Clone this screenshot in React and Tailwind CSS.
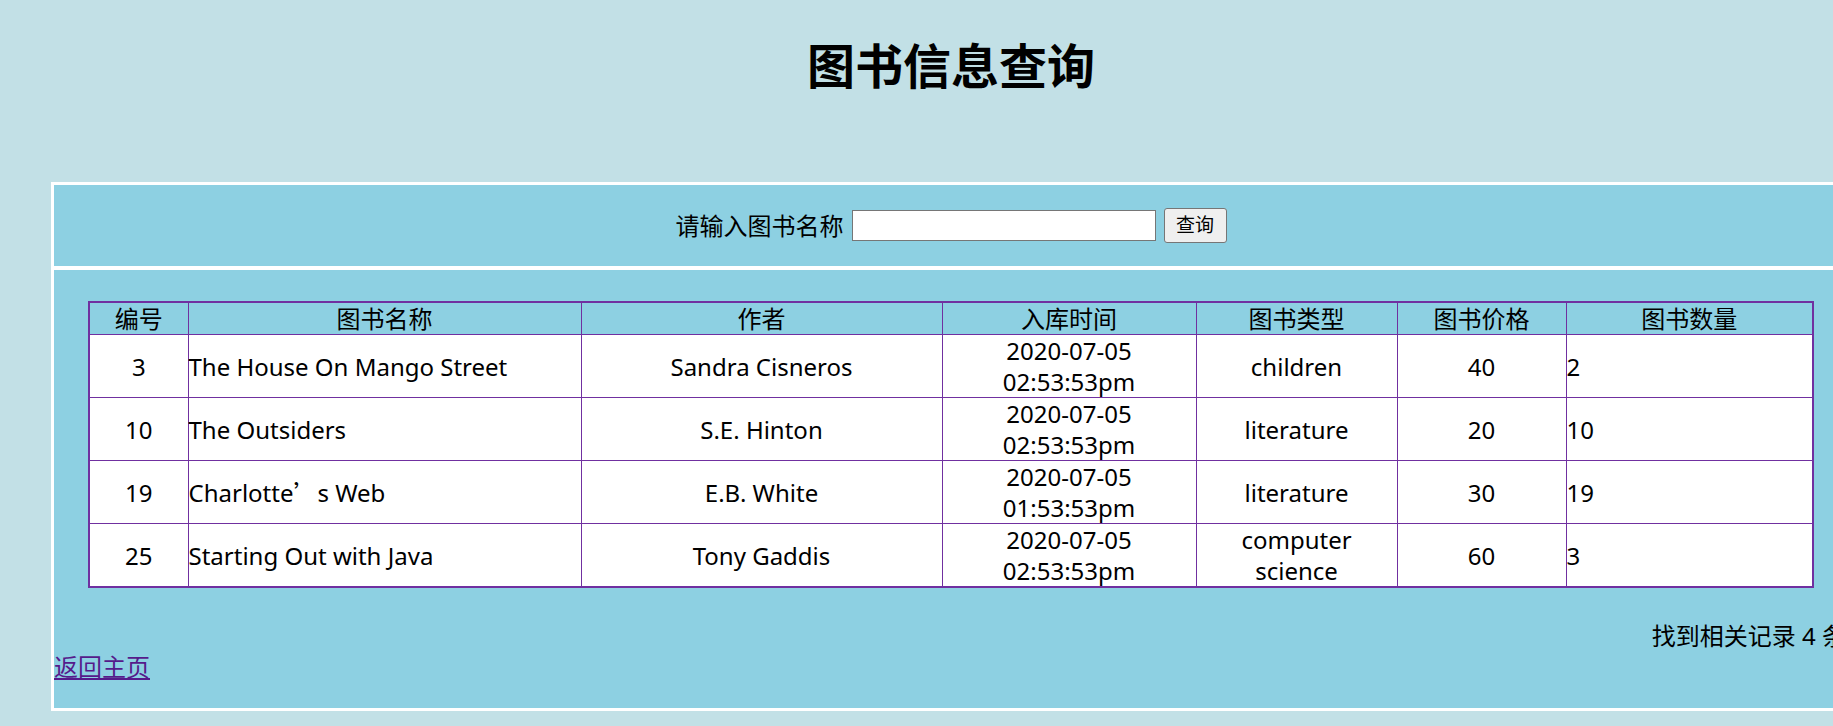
const books = [
  { id: 3, name: 'The House On Mango Street', author: 'Sandra Cisneros', time: ['2020-07-05', '02:53:53pm'], type: ['children'], price: 40, qty: 2 },
  { id: 10, name: 'The Outsiders', author: 'S.E. Hinton', time: ['2020-07-05', '02:53:53pm'], type: ['literature'], price: 20, qty: 10 },
  { id: 19, name: 'Charlotte’s Web', author: 'E.B. White', time: ['2020-07-05', '01:53:53pm'], type: ['literature'], price: 30, qty: 19 },
  { id: 25, name: 'Starting Out with Java', author: 'Tony Gaddis', time: ['2020-07-05', '02:53:53pm'], type: ['computer', 'science'], price: 60, qty: 3 },
]

const headers = ['编号', '图书名称', '作者', '入库时间', '图书类型', '图书价格', '图书数量']
const widths = ['w-[99px]', 'w-[393px]', 'w-[361px]', 'w-[254px]', 'w-[201px]', 'w-[169px]', 'w-[247px]']

const cell = 'border border-[#7030a0] p-0 leading-[31px] align-middle'

function Lines({ items }) {
  return items.map((t, i) => <div key={i}>{t}</div>)
}

function BookName({ name }) {
  // the curly quote renders full width in the original CJK font
  const parts = name.split('’')
  if (parts.length === 1) return name
  return (
    <>
      {parts[0]}
      <span style={{ fontFamily: '"Noto Sans CJK SC", sans-serif' }}>’</span>
      {parts[1]}
    </>
  )
}

export default function App() {
  return (
    <div
      className="w-full h-[726px] overflow-hidden bg-[#c2e0e6] text-black"
      style={{ fontFamily: '"Noto Sans", "Noto Sans CJK SC", sans-serif' }}
    >
      <div className="w-[1902px]">
        <h1 className="pt-[34px] text-center text-[48px] font-bold leading-[63px]">图书信息查询</h1>

        <div className="mt-[85px] ml-[51px] w-[1800px] border-[3px] border-white bg-[#8dd0e2]">
          <div className="h-[85px] flex items-center justify-center gap-2 border-b-4 border-white text-[24px]">
            <span className="leading-[31px]">请输入图书名称</span>
            <input type="text" className="w-[304px] h-[31px] bg-white border border-[#767676] outline-none" />
            <button className="w-[63px] h-[35px] bg-[#efefef] border border-[#767676] rounded-[3px] text-[19px] leading-none">查询</button>
          </div>

          <div className="pt-[31px] pb-[26px] text-[24px]">
            <table className="mx-auto w-[1724px] table-fixed border-collapse border-2 border-[#7030a0]">
              <colgroup>
                {widths.map((w, i) => <col key={i} className={w} />)}
              </colgroup>
              <thead>
                <tr>
                  {headers.map(h => (
                    <th key={h} className={`${cell} font-normal text-center`}>{h}</th>
                  ))}
                </tr>
              </thead>
              <tbody className="bg-white">
                {books.map(b => (
                  <tr key={b.id} className="h-[63px]">
                    <td className={`${cell} text-center`}>{b.id}</td>
                    <td className={`${cell} text-left`}><BookName name={b.name} /></td>
                    <td className={`${cell} text-center`}>{b.author}</td>
                    <td className={`${cell} text-center`}><Lines items={b.time} /></td>
                    <td className={`${cell} text-center`}><Lines items={b.type} /></td>
                    <td className={`${cell} text-center`}>{b.price}</td>
                    <td className={`${cell} text-left`}>{b.qty}</td>
                  </tr>
                ))}
              </tbody>
            </table>

            <p className="mt-[32px] pr-[2px] text-right leading-[31px]">找到相关记录 4 条</p>
            <a href="#" className="block w-fit leading-[31px] text-[#551a8b] underline">返回主页</a>
          </div>
        </div>
      </div>
    </div>
  )
}
